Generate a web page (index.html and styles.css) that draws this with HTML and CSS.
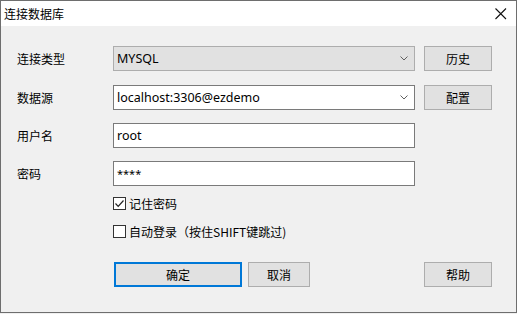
FILE: index.html
```html
<!DOCTYPE html>
<html lang="zh">
<head>
<meta charset="utf-8">
<title>连接数据库</title>
<link rel="stylesheet" href="styles.css">
</head>
<body>
<div class="window">
  <div class="titlebar">
    <span class="title">连接数据库</span>
    <svg class="close" width="12" height="12" viewBox="0 0 12 12"><path d="M0.5 0.5 L11 11 M11 0.5 L0.5 11" stroke="#111" stroke-width="1.1" fill="none"/></svg>
  </div>
  <div class="content">
    <div class="row r1">
      <span class="label">连接类型</span>
      <div class="combo disabled"><span>MYSQL</span><svg class="chev" width="8" height="5" viewBox="0 0 8 5"><path d="M0.5 0.5 L4 4 L7.5 0.5" stroke="#606060" fill="none"/></svg></div>
      <div class="btn">历史</div>
    </div>
    <div class="row r2">
      <span class="label">数据源</span>
      <div class="combo"><span>localhost:3306@ezdemo</span><svg class="chev" width="8" height="5" viewBox="0 0 8 5"><path d="M0.5 0.5 L4 4 L7.5 0.5" stroke="#606060" fill="none"/></svg></div>
      <div class="btn">配置</div>
    </div>
    <div class="row r3">
      <span class="label">用户名</span>
      <div class="input">root</div>
    </div>
    <div class="row r4">
      <span class="label">密码</span>
      <div class="input pw">****</div>
    </div>
    <div class="check c1">
      <span class="box"><svg width="11" height="11" viewBox="0 0 11 11"><path d="M1.5 5.5 L4.2 8.3 L9.5 2.5" stroke="#222" stroke-width="1.2" fill="none"/></svg></span>
      <span>记住密码</span>
    </div>
    <div class="check c2">
      <span class="box"></span>
      <span>自动登录（按住SHIFT键跳过)</span>
    </div>
    <div class="buttons">
      <div class="btn ok">确定</div>
      <div class="btn cancel">取消</div>
      <div class="btn help">帮助</div>
    </div>
  </div>
</div>
</body>
</html>
```
FILE: styles.css
```css
* { box-sizing: border-box; }
html, body { margin: 0; padding: 0; background: #f0f0f0; }
body {
  font-family: "Noto Sans", "Noto Sans CJK SC", sans-serif;
  font-size: 12px;
  color: #000;
}
.window {
  width: 517px;
  height: 313px;
  border: 1px solid #6e6e6e;
  background: #f0f0f0;
  display: flex;
  flex-direction: column;
}
.titlebar {
  height: 25px;
  background: #fff;
  display: flex;
  align-items: center;
  justify-content: space-between;
  padding: 0 9px 0 3px;
}
.title {
  font-family: "Noto Sans CJK SC", sans-serif;
  font-size: 12px;
  line-height: 16px;
  margin-top: 1px;
}
.close { display: block; margin-top: 1px; }
.content {
  padding: 20px 0 0 16px;
  display: flex;
  flex-direction: column;
}
.row {
  display: grid;
  grid-template-columns: 87px 302px 68px;
  column-gap: 9px;
  height: 25px;
  align-items: center;
}
.r2 { margin-top: 14px; }
.r3, .r4 { margin-top: 13px; }
.label {
  font-family: "Noto Sans CJK SC", sans-serif;
  line-height: 16px;
}
.combo, .input {
  height: 25px;
  border: 1px solid #7a7a7a;
  background: #fff;
  display: flex;
  align-items: center;
  justify-content: space-between;
  padding: 0 6px 0 3px;
  line-height: 16px;
  font-size: 12.5px;
}
.combo.disabled {
  background: #e1e1e1;
  border-color: #adadad;
}
.chev { display: block; }
.input.pw { font-size: 11px; }
.btn {
  height: 25px;
  border: 1px solid #adadad;
  background: #e1e1e1;
  display: flex;
  align-items: center;
  justify-content: center;
  font-family: "Noto Sans CJK SC", sans-serif;
  line-height: 16px;
}
.check {
  display: flex;
  align-items: center;
  height: 17px;
  margin-left: 96px;
  font-family: "Noto Sans CJK SC", sans-serif;
  gap: 3px;
}
.c1 { margin-top: 9px; }
.c2 { margin-top: 11px; }
.box {
  width: 13px;
  height: 13px;
  border: 1px solid #333;
  background: #fff;
  display: flex;
  align-items: center;
  justify-content: center;
}
.box svg { display: block; }
.buttons {
  display: flex;
  margin-top: 22px;
  margin-left: 97px;
  width: 378px;
}
.ok {
  width: 128px;
  border: 2px solid #0078d7;
}
.cancel {
  width: 62px;
  margin-left: 6px;
}
.help {
  width: 68px;
  margin-left: auto;
}
```
